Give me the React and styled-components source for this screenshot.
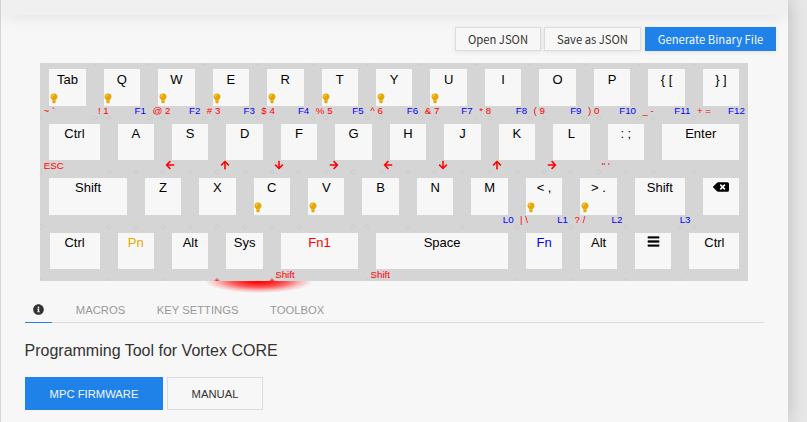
import React from "react";
import styled, { createGlobalStyle } from "styled-components";
import {
  FaArrowLeft, FaArrowRight, FaArrowUp, FaArrowDown, FaBackspace, FaBars, FaInfoCircle,
} from "react-icons/fa";

const Global = createGlobalStyle`
  *, *::before, *::after { box-sizing: border-box; }
  body { margin: 0; background: #e8e8e8; font-family: "Liberation Sans", Arial, sans-serif; overflow: hidden; }
`;

const Page = styled.div`
  width: 788px;
  height: 422px;
  display: flex;
  flex-direction: column;
  background: #f7f7f7;
  border-left: 1px solid #d5d5d5;
  box-shadow: 0 0 20px rgba(0, 0, 0, 0.2);
`;

const Header = styled.header`
  flex: none;
  height: 15px;
  background: #f0f0f0;
  box-shadow: 0 5px 15px -3px rgba(0, 0, 0, 0.1);
`;

const Toolbar = styled.div`
  display: flex;
  justify-content: flex-end;
  gap: 3px;
  padding: 12px 12px 0 0;
`;

const ToolButton = styled.button`
  width: ${(p) => p.$width}px;
  height: 24px;
  margin-left: ${(p) => (p.$primary ? 1 : 0)}px;
  padding: 0;
  border: 1px solid ${(p) => (p.$primary ? "#1e82e8" : "#dcdcdc")};
  background: ${(p) => (p.$primary ? "#1e82e8" : "#f7f7f7")};
  color: ${(p) => (p.$primary ? "#f7f7f7" : "#333")};
  font: 11.25px/20px "Noto Sans CJK SC", "Noto Sans", sans-serif;
  white-space: nowrap;
  box-shadow: 0 1px 5px rgba(0, 0, 0, 0.08);
`;

const Board = styled.div`
  position: relative;
  width: 708px;
  height: 218px;
  margin: 12px 0 0 39px;
`;

const Keys = styled.div`
  position: relative;
  height: 218px;
  padding-top: 0.25px;
  display: grid;
  grid-template-rows: repeat(4, 54.46px);
  background: #d5d5d5;
  overflow: hidden;
`;

const Glow = styled.div`
  position: absolute;
  left: 165px;
  bottom: -12px;
  width: 108px;
  height: 24px;
  background: radial-gradient(closest-side, #ff0000 0%, #ff1414 20%, rgba(255, 30, 30, 0.75) 50%, rgba(255, 50, 50, 0.3) 78%, rgba(255, 0, 0, 0) 100%);
`;

const Row = styled.div`
  display: flex;
  padding-left: ${(p) => p.$inset}px;
`;

const KeyCell = styled.div`
  position: relative;
  flex: none;
  width: ${(p) => p.$units * 54.46}px;
  padding: 6px 9px 12px;
  &::before, &::after {
    content: "";
    position: absolute;
    left: -2px;
    width: 4px;
    height: 4px;
    border: 1px solid ${(p) => (p.$glowing ? "#dc8080" : "#cbcbcb")};
    background: ${(p) => (p.$glowing ? "#f03030" : "#dadada")};
    transform: rotate(45deg);
  }
  &::before { top: -2px; border-color: #cbcbcb; background: #dadada; }
  &::after { bottom: -2px; }
`;

const Cap = styled.div`
  height: 36.46px;
  padding-top: 2.29px;
  background: #f7f7f7;
  color: ${(p) => p.$color || "#000"};
  font-size: 13px;
  line-height: 15px;
  text-align: center;
  white-space: pre;
  svg { display: block; margin: 0 auto; }
`;

const Legend = styled.span`
  position: absolute;
  top: 42.2px;
  ${(p) => (p.$right ? "right: 3.25px;" : "left: 3.25px;")}
  color: ${(p) => (p.$right ? "#0000ff" : "#ff0000")};
  font-size: 9.75px;
  line-height: 11px;
  white-space: pre;
  svg { display: block; margin-left: -0.75px; }
`;

const BulbMark = styled.svg`
  position: absolute;
  left: 9.7px;
  top: 30px;
  width: 8px;
  height: 11px;
`;

const Bulb = () => (
  <BulbMark viewBox="0 0 8 11">
    <path d="M4 .5A3.500 3.500 0 0 0 .5 4c0 1.500 1.500 2.200 1.800 3.400h3.400C6 6.200 7.500 5.500 7.500 4A3.500 3.500 0 0 0 4 .5z" fill="#e6a700" />
    <path d="M2.400 7.600h3.200v1.800l-.7.900H3.100l-.7-.9z" fill="#e6a700" />
    <path d="M2 3.900A2 2 0 0 1 3.900 2" fill="none" stroke="#fbe7ae" strokeWidth=".8" />
  </BulbMark>
);

const Tabs = styled.nav`
  flex: none;
  display: flex;
  width: 739px;
  height: 26px;
  margin: 16px 0 0 24px;
  border-bottom: 1px solid #dcdcdc;
`;

const Tab = styled.div`
  height: 26px;
  margin-right: ${(p) => p.$gap}px;
  padding: ${(p) => (p.$active ? "0 7px" : "0")};
  width: ${(p) => (p.$active ? "27px" : "auto")};
  border-bottom: ${(p) => (p.$active ? "1px solid #1e82e8" : "none")};
  color: ${(p) => (p.$active ? "#333" : "#999")};
  font-size: 11.25px;
  line-height: 26px;
  svg { display: block; margin: 7px 0 0 0.5px; }
`;

const Title = styled.h1`
  margin: 18px 0 0 23.5px;
  color: #333;
  font-size: 16px;
  font-weight: 400;
  line-height: 20px;
`;

const Actions = styled.div`
  display: flex;
  gap: 4px;
  margin: 16px 0 0 24px;
`;

const Action = styled.button`
  width: ${(p) => p.$width}px;
  height: 33px;
  padding: 1px 0 0;
  border: 1px solid ${(p) => (p.$primary ? "#1e82e8" : "#dcdcdc")};
  background: ${(p) => (p.$primary ? "#1e82e8" : "#f7f7f7")};
  color: ${(p) => (p.$primary ? "#f7f7f7" : "#333")};
  font: 11.25px "Liberation Sans", Arial, sans-serif;
`;

const MenuIcon = styled(FaBars)`
  width: 13px;
  height: 13px;
  stroke: currentColor;
  stroke-width: 12px;
`;

const EraseIcon = styled(FaBackspace)`
  width: 16px;
  height: 16px;
  && { margin-top: -1px; }
`;

const left = <FaArrowLeft size={10} />;
const right = <FaArrowRight size={10} />;
const up = <FaArrowUp size={10} />;
const down = <FaArrowDown size={10} />;

const insets = [0.25, 0.45, 0.35, 0.5];

const rows = [
  [
    { cap: "Tab", fn1: "~ `", lit: true },
    { cap: "Q", fn1: "! 1", fn: "F1", lit: true },
    { cap: "W", fn1: "@ 2", fn: "F2", lit: true },
    { cap: "E", fn1: "# 3", fn: "F3", lit: true },
    { cap: "R", fn1: "$ 4", fn: "F4", lit: true },
    { cap: "T", fn1: "% 5", fn: "F5", lit: true },
    { cap: "Y", fn1: "^ 6", fn: "F6", lit: true },
    { cap: "U", fn1: "& 7", fn: "F7", lit: true },
    { cap: "I", fn1: "* 8", fn: "F8" },
    { cap: "O", fn1: "( 9", fn: "F9" },
    { cap: "P", fn1: ") 0", fn: "F10" },
    { cap: "{ [", fn1: "_ -", fn: "F11" },
    { cap: "} ]", fn1: "+ =", fn: "F12" },
  ],
  [
    { cap: "Ctrl", units: 1.25, fn1: "ESC" },
    { cap: "A" },
    { cap: "S", fn1: left },
    { cap: "D", fn1: up },
    { cap: "F", fn1: down },
    { cap: "G", fn1: right },
    { cap: "H", fn1: left },
    { cap: "J", fn1: down },
    { cap: "K", fn1: up },
    { cap: "L", fn1: right },
    { cap: ": ;", fn1: "\" '" },
    { cap: "Enter", units: 1.75 },
  ],
  [
    { cap: "Shift", units: 1.75 },
    { cap: "Z" },
    { cap: "X" },
    { cap: "C", lit: true },
    { cap: "V", lit: true },
    { cap: "B" },
    { cap: "N" },
    { cap: "M", fn: "L0" },
    { cap: "< ,", fn1: "| \\", fn: "L1", lit: true },
    { cap: "> .", fn1: "? /", fn: "L2", lit: true },
    { cap: "Shift", units: 1.25, fn: "L3" },
    { cap: <EraseIcon /> },
  ],
  [
    { cap: "Ctrl", units: 1.25 },
    { cap: "Pn", color: "#e6a700" },
    { cap: "Alt" },
    { cap: "Sys", glowing: true },
    { cap: "Fn1", units: 1.75, color: "#ff0000", fn1: "Shift", glowing: true },
    { cap: "Space", units: 2.75, fn1: "Shift" },
    { cap: "Fn", color: "#0000ff" },
    { cap: "Alt" },
    { cap: <MenuIcon /> },
    { cap: "Ctrl", units: 1.25 },
  ],
];

const Key = ({ cap, units = 1, color, fn1, fn, lit, glowing }) => (
  <KeyCell $units={units} $glowing={glowing}>
    <Cap $color={color}>{cap}</Cap>
    {lit && <Bulb />}
    {fn1 && <Legend>{fn1}</Legend>}
    {fn && <Legend $right>{fn}</Legend>}
  </KeyCell>
);

export default function App() {
  return (
    <>
      <Global />
      <Page>
        <Header />
        <Toolbar>
          <ToolButton $width={86}>Open JSON</ToolButton>
          <ToolButton $width={97}>Save as JSON</ToolButton>
          <ToolButton $width={131} $primary>Generate Binary File</ToolButton>
        </Toolbar>
        <Board>
          <Glow />
          <Keys>
            {rows.map((keys, r) => (
              <Row key={r} $inset={insets[r]}>
                {keys.map((k, i) => <Key key={i} {...k} />)}
              </Row>
            ))}
          </Keys>
        </Board>
        <Tabs>
          <Tab $active $gap={23.8}><FaInfoCircle size={11} /></Tab>
          <Tab $gap={31.6}>MACROS</Tab>
          <Tab $gap={31.6}>KEY SETTINGS</Tab>
          <Tab $gap={0}>TOOLBOX</Tab>
        </Tabs>
        <Title>Programming Tool for Vortex CORE</Title>
        <Actions>
          <Action $width={138} $primary>MPC FIRMWARE</Action>
          <Action $width={96}>MANUAL</Action>
        </Actions>
      </Page>
    </>
  );
}
